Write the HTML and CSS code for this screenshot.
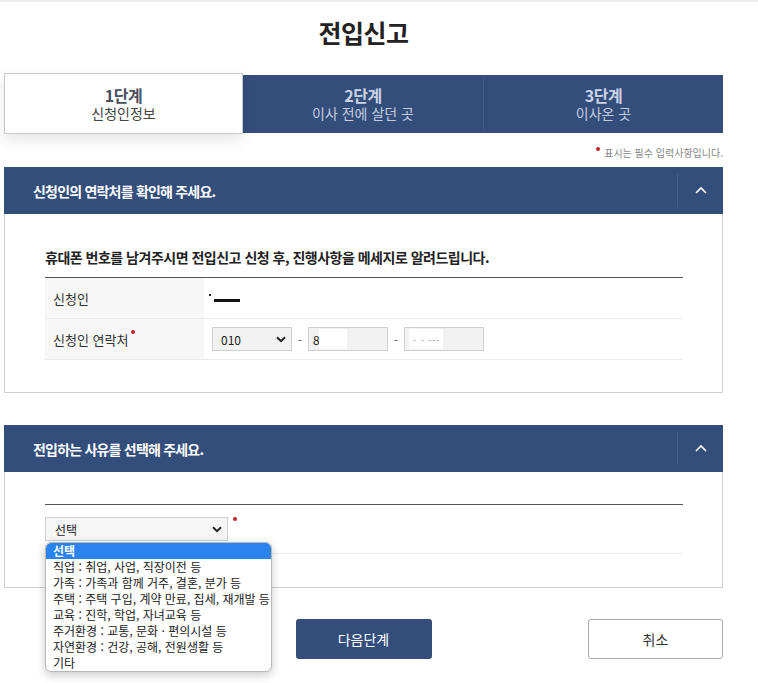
FILE: index.html
```html
<!DOCTYPE html>
<html lang="ko">
<head>
<meta charset="utf-8">
<title>전입신고</title>
<link rel="stylesheet" href="styles.css">
</head>
<body>
<div class="topline"></div>
<div class="page">
  <h1 class="title">전입신고</h1>

  <div class="steps">
    <div class="step step-active">
      <div class="step-num">1단계</div>
      <div class="step-name">신청인정보</div>
    </div>
    <div class="step">
      <div class="step-num">2단계</div>
      <div class="step-name">이사 전에 살던 곳</div>
    </div>
    <div class="step step-last">
      <div class="step-num">3단계</div>
      <div class="step-name">이사온 곳</div>
    </div>
  </div>

  <div class="notice"><span class="req-dot"></span>표시는 필수 입력사항입니다.</div>

  <section class="panel">
    <div class="panel-head">
      <h2 class="panel-title">신청인의 연락처를 확인해 주세요.</h2>
      <div class="toggle">
        <svg width="12" height="8" viewBox="0 0 12 8"><path d="M1 7 L6 2 L11 7" fill="none" stroke="#fff" stroke-width="1.6"/></svg>
      </div>
    </div>
    <div class="panel-body">
      <p class="lead">휴대폰 번호를 남겨주시면 전입신고 신청 후, 진행사항을 메세지로 알려드립니다.</p>
      <div class="table">
        <div class="row">
          <div class="th">신청인</div>
          <div class="td"><span class="mask-dot"></span><span class="mask-bar"></span></div>
        </div>
        <div class="row">
          <div class="th">신청인 연락처<span class="req-sup"></span></div>
          <div class="td phone">
            <div class="sel sel-phone"><span>010</span>
              <svg class="chev" width="10" height="7" viewBox="0 0 10 7"><path d="M1 1.2 L5 5.2 L9 1.2" fill="none" stroke="#222" stroke-width="2"/></svg>
            </div>
            <span class="dash">-</span>
            <div class="inp"><span class="inp-text">8</span><span class="whiteout w1"></span></div>
            <span class="dash">-</span>
            <div class="inp"><span class="whiteout w2"><span class="faint">· · ‑‑‑</span></span></div>
          </div>
        </div>
      </div>
    </div>
  </section>

  <section class="panel panel-2">
    <div class="panel-head">
      <h2 class="panel-title">전입하는 사유를 선택해 주세요.</h2>
      <div class="toggle">
        <svg width="12" height="8" viewBox="0 0 12 8"><path d="M1 7 L6 2 L11 7" fill="none" stroke="#fff" stroke-width="1.6"/></svg>
      </div>
    </div>
    <div class="panel-body body-2">
      <div class="table table-2">
        <div class="row row-2">
          <div class="reason">
            <div class="sel sel-reason"><span>선택</span>
              <svg class="chev" width="10" height="7" viewBox="0 0 10 7"><path d="M1 1.2 L5 5.2 L9 1.2" fill="none" stroke="#222" stroke-width="2"/></svg>
            </div>
            <span class="req-sup req-reason"></span>
            <ul class="dropdown">
              <li class="opt opt-on">선택</li>
              <li class="opt">직업 : 취업, 사업, 직장이전 등</li>
              <li class="opt">가족 : 가족과 함께 거주, 결혼, 분가 등</li>
              <li class="opt">주택 : 주택 구입, 계약 만료, 집세, 재개발 등</li>
              <li class="opt">교육 : 진학, 학업, 자녀교육 등</li>
              <li class="opt">주거환경 : 교통, 문화 · 편의시설 등</li>
              <li class="opt">자연환경 : 건강, 공해, 전원생활 등</li>
              <li class="opt">기타</li>
            </ul>
          </div>
        </div>
      </div>
    </div>
  </section>

  <div class="actions">
    <span></span>
    <button class="btn btn-primary">다음단계</button>
    <button class="btn btn-cancel">취소</button>
  </div>
</div>
</body>
</html>
```

FILE: styles.css
```css
* { box-sizing: border-box; }
html, body { margin: 0; padding: 0; background: #fff; }
body {
  font-family: "Noto Sans CJK KR", "Noto Sans", sans-serif;
  color: #222;
  width: 758px;
  height: 683px;
  overflow: hidden;
}
.topline { height: 2px; background: #ececec; }
.page { width: 719px; margin-left: 4px; }

.title {
  margin: 0;
  padding-top: 12px;
  height: 73px;
  text-align: center;
  font-size: 25px;
  line-height: 36px;
  font-weight: 700;
  color: #222;
  letter-spacing: -0.5px;
}

.steps {
  display: grid;
  grid-template-columns: 239px 241px 239px;
  height: 58px;
  background: #344e7b;
}
.step {
  display: flex;
  flex-direction: column;
  align-items: center;
  justify-content: center;
  border-right: 1px solid #405a86;
  color: #c9d3e5;
}
.step-last { border-right: 0; }
.step-num { font-size: 16px; font-weight: 700; line-height: 18px; letter-spacing: -0.5px; }
.step-name { font-size: 14px; line-height: 18px; color: #c3cde0; }
.step-active {
  background: #fff;
  border: 1px solid #c8c8cc;
  margin: -2px 0 -1px 0;
  box-shadow: 0 6px 14px rgba(0, 0, 0, 0.10);
  position: relative;
  z-index: 1;
}
.step-active .step-num { color: #4a5060; }
.step-active .step-name { color: #444; }

.notice {
  padding-top: 12px;
  height: 34px;
  line-height: 16px;
  text-align: right;
  font-size: 10px;
  color: #888;
}
.req-dot {
  display: inline-block;
  width: 4px; height: 4px;
  border-radius: 50%;
  background: #c3232d;
  margin-right: 4px;
  vertical-align: 6px;
}

.panel-head {
  display: flex;
  align-items: center;
  height: 47px;
  background: #344e7b;
}
.panel-title {
  flex: 1;
  margin: 0;
  padding-left: 29px;
  font-size: 14px;
  font-weight: 700;
  color: #fff;
  letter-spacing: -0.8px;
}
.toggle {
  width: 47px;
  height: 33px;
  border-left: 1px solid #455e89;
  display: flex;
  align-items: center;
  justify-content: center;
  margin-right: -1px;
  padding-bottom: 2px;
}
.panel-body {
  border: 1px solid #cfcfcf;
  border-top: 0;
  padding: 33px 39px 32px 40px;
}
.lead {
  margin: 0;
  font-size: 14px;
  line-height: 20px;
  font-weight: 700;
  color: #222;
  letter-spacing: -0.5px;
}
.table {
  margin-top: 10px;
  border-top: 1px solid #555;
}
.row {
  display: flex;
  height: 41px;
  border-bottom: 1px solid #ececec;
}
.th {
  width: 159px;
  background: #f7f7f7;
  padding-left: 8px;
  display: flex;
  align-items: center;
  font-size: 13px;
  color: #333;
}
.td {
  flex: 1;
  display: flex;
  align-items: center;
  padding-left: 5px;
  position: relative;
}
.mask-dot {
  display: inline-block;
  width: 2px; height: 2px;
  background: #222;
  margin-top: -6px;
}
.mask-bar {
  display: inline-block;
  width: 26px; height: 3px;
  background: #111;
  margin-left: 3px;
  margin-top: 4px;
}
.req-sup {
  display: inline-block;
  width: 4px; height: 4px;
  border-radius: 50%;
  background: #c3232d;
  margin-left: 3px;
  align-self: flex-start;
  margin-top: 11px;
}
.phone { padding-left: 8px; }
.sel {
  display: flex;
  align-items: center;
  justify-content: space-between;
  height: 24px;
  border: 1px solid #cfcfcf;
  background: #f2f2f2;
  font-size: 12px;
  color: #222;
  padding: 0 5px 0 8px;
}
.sel-phone { width: 80px; }
.dash { width: 16px; text-align: center; font-size: 12px; color: #555; }
.inp {
  width: 80px;
  height: 24px;
  border: 1px solid #cfcfcf;
  background: #f2f2f2;
  display: flex;
  align-items: center;
  padding-left: 4px;
  font-size: 12px;
}
.inp-text { width: 6px; }
.whiteout { display: inline-block; height: 20px; background: #fff; }
.w1 { width: 28px; }
.w2 { width: 34px; display: inline-flex; align-items: center; padding-left: 3px; }
.faint { font-size: 8px; color: #666; letter-spacing: 1px; }

.panel-2 { margin-top: 32px; }
.body-2 { padding-top: 32px; padding-bottom: 33px; }
.table-2 { margin-top: 0; }
.row-2 { height: 49px; }
.reason {
  position: relative;
  display: flex;
  padding-top: 12px;
}
.sel-reason {
  width: 183px;
  height: 24px;
  background: #f6f6f6;
  padding-left: 9px;
  font-size: 12px;
}
.req-reason { margin-top: 0; margin-left: 5px; }

.dropdown {
  position: absolute;
  left: 0;
  top: 37px;
  width: 227px;
  margin: 0;
  padding: 0;
  list-style: none;
  background: #fff;
  border: 1px solid #b8b8b8;
  border-radius: 6px;
  box-shadow: 0 3px 10px rgba(0, 0, 0, 0.22);
  overflow: hidden;
  z-index: 5;
}
.opt {
  height: 16px;
  line-height: 16px;
  padding-left: 7px;
  font-size: 12px;
  color: #222;
  white-space: nowrap;
  letter-spacing: 0;
}
.opt-on {
  background: #2a83ee;
  color: #fff;
  font-weight: 700;
  border-radius: 5px 5px 0 0;
}

.actions {
  display: grid;
  grid-template-columns: 1fr 136px 1fr;
  align-items: center;
  margin-top: 31px;
}
.btn {
  height: 40px;
  font-family: "Noto Sans CJK KR", "Noto Sans", sans-serif;
  font-size: 14px;
  border-radius: 3px;
  cursor: pointer;
}
.btn-primary {
  background: #344e7b;
  color: #fff;
  border: 0;
  width: 136px;
}
.btn-cancel {
  justify-self: end;
  width: 135px;
  background: #fff;
  border: 1px solid #aaa;
  color: #333;
}
```
